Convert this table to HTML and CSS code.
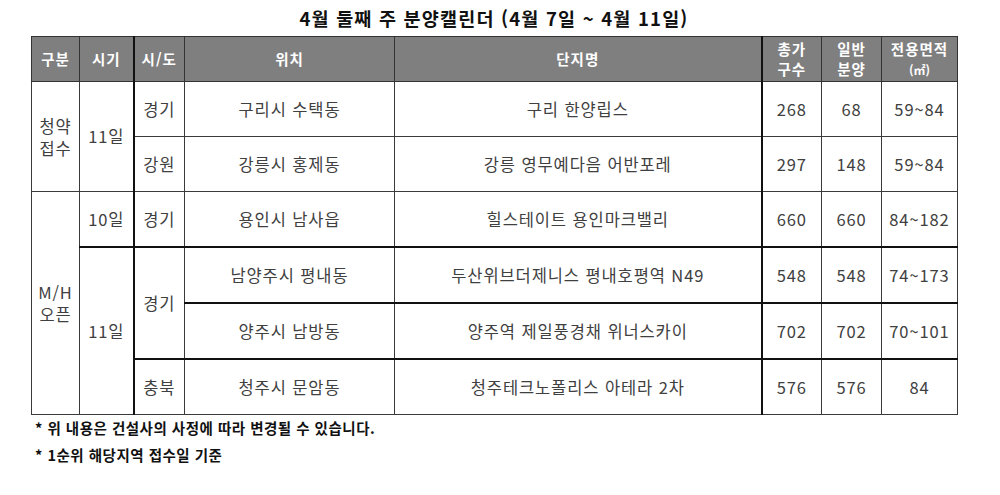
FILE: index.html
```html
<!DOCTYPE html>
<html lang="ko">
<head>
<meta charset="utf-8">
<link rel="stylesheet" href="styles.css">
</head>
<body>
<div class="page">
  <h1 class="title">4월 둘째 주 분양캘린더 (4월 7일 ~ 4월 11일)</h1>
  <table class="cal">
    <colgroup>
      <col class="c1"><col class="c2"><col class="c3"><col class="c4"><col class="c5"><col class="c6"><col class="c7"><col class="c8">
    </colgroup>
    <thead>
      <tr>
        <th>구분</th><th>시기</th><th class="tl">시/도</th><th>위치</th><th>단지명</th><th class="tl two">총가<br>구수</th><th class="two">일반<br>분양</th><th class="two">전용면적<br><span class="unit">(㎡)</span></th>
      </tr>
    </thead>
    <tbody>
      <tr>
        <td rowspan="2" class="dbl">청약<br>접수</td><td rowspan="2">11일</td><td class="tl">경기</td><td>구리시 수택동</td><td>구리 한양립스</td><td class="tl">268</td><td>68</td><td>59~84</td>
      </tr>
      <tr>
        <td class="tl">강원</td><td>강릉시 홍제동</td><td>강릉 영무예다음 어반포레</td><td class="tl">297</td><td>148</td><td>59~84</td>
      </tr>
      <tr class="thickb">
        <td rowspan="4" class="nb dbl">M/H<br>오픈</td><td>10일</td><td class="tl">경기</td><td>용인시 남사읍</td><td>힐스테이트 용인마크밸리</td><td class="tl">660</td><td>660</td><td>84~182</td>
      </tr>
      <tr class="thickb">
        <td rowspan="3" class="nb">11일</td><td rowspan="2" class="tl">경기</td><td>남양주시 평내동</td><td>두산위브더제니스 평내호평역 N49</td><td class="tl">548</td><td>548</td><td>74~173</td>
      </tr>
      <tr class="thickb">
        <td>양주시 남방동</td><td>양주역 제일풍경채 위너스카이</td><td class="tl">702</td><td>702</td><td>70~101</td>
      </tr>
      <tr class="last">
        <td class="tl">충북</td><td>청주시 문암동</td><td>청주테크노폴리스 아테라 2차</td><td class="tl">576</td><td>576</td><td>84</td>
      </tr>
    </tbody>
  </table>
  <p class="note">* 위 내용은 건설사의 사정에 따라 변경될 수 있습니다.</p>
  <p class="note">* 1순위 해당지역 접수일 기준</p>
</div>
</body>
</html>
```
FILE: styles.css
```css
html, body {
  margin: 0;
  padding: 0;
  background: #ffffff;
}
body {
  font-family: "Noto Sans CJK KR", "Noto Sans", sans-serif;
  color: #404040;
}
.page {
  width: 926px;
  padding: 7px 0 0 31px;
}
.title {
  margin: 0 0 6px 0;
  font-size: 18.5px;
  line-height: 23px;
  letter-spacing: 1.2px;
  font-weight: 700;
  color: #111111;
  text-align: center;
}
.cal {
  border-collapse: collapse;
  table-layout: fixed;
  width: 926px;
}
.c1 { width: 48px; }
.c2 { width: 54px; }
.c3 { width: 51px; }
.c4 { width: 210px; }
.c5 { width: 367px; }
.c6 { width: 60px; }
.c7 { width: 60px; }
.c8 { width: 76px; }
.cal th, .cal td {
  border: 1px solid #3a3a3a;
  padding: 0;
  text-align: center;
  vertical-align: middle;
}
.cal th {
  background: #7f7f7f;
  color: #ffffff;
  font-size: 14.5px;
  font-weight: 700;
  letter-spacing: 1px;
  line-height: 20px;
  height: 44px;
  border-color: #333333;
}
.cal th .unit {
  font-size: 12px;
  letter-spacing: 0;
}
.cal td {
  font-size: 16.5px;
  letter-spacing: 0.9px;
  line-height: 21px;
  height: 54px;
}
.cal td.dbl {
  line-height: 22px;
}
.cal .tl {
  border-left: 2px solid #111111;
}
.cal tr.thickb td {
  border-bottom: 2px solid #111111;
}
.cal tr.thickb td.nb {
  border-bottom: 1px solid #3a3a3a;
}
.note {
  margin: 2px 0 0 4px;
  font-size: 14.5px;
  line-height: 21px;
  letter-spacing: 0.5px;
  font-weight: 700;
  color: #111111;
}
.note + .note {
  margin-top: 6px;
}
```
